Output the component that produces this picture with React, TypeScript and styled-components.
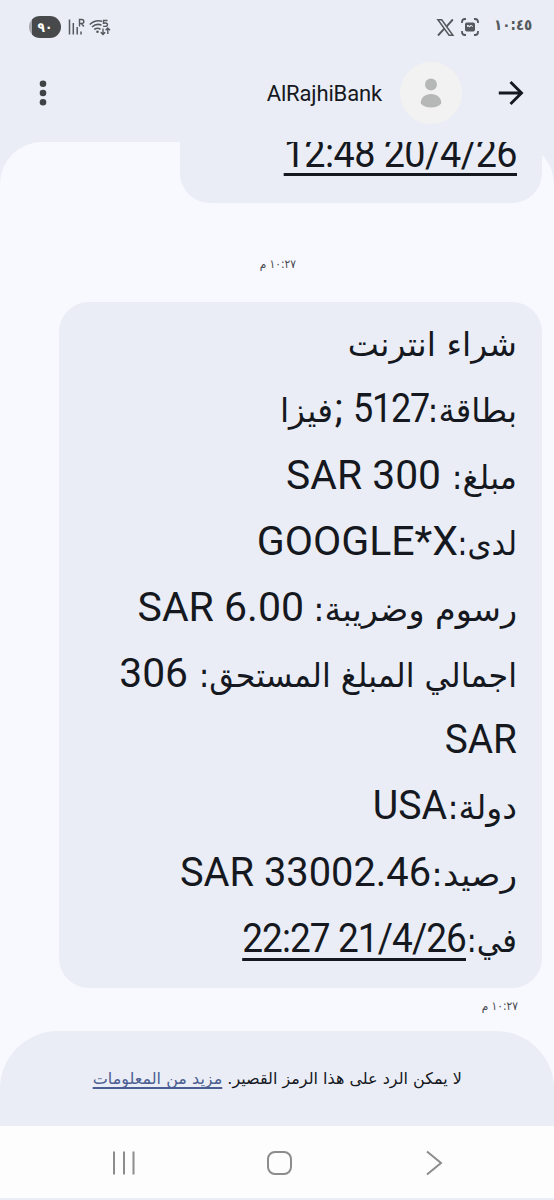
import React from "react";
import styled, { createGlobalStyle } from "styled-components";

const Global = createGlobalStyle`
  * { box-sizing: border-box; }
  body { margin: 0; background: #e9edf5; }
`;

const latin = `Roboto, "Liberation Sans", sans-serif`;
const arabic = `"DejaVu Sans", sans-serif`;
const arabicNarrow = `"DejaVu Sans Condensed", "DejaVu Sans", sans-serif`;

const Screen = styled.div`
  width: 554px;
  height: 1200px;
  display: flex;
  flex-direction: column;
  overflow: hidden;
  direction: rtl;
  background: #eaedf5;
  color: #15181e;
  font-family: ${latin};
`;

const StatusBar = styled.div`
  height: 54px;
  padding: 0 24px 0 29px;
  display: flex;
  align-items: center;
  justify-content: space-between;
  flex: none;
`;

const StatusGroup = styled.div`
  display: flex;
  direction: ltr;
  align-items: center;
  color: #55585d;
`;

const Clock = styled.span`
  margin-left: 15px;
  width: 36px;
  height: 24px;
  font: bold 15px/20px ${arabicNarrow};
  white-space: nowrap;
`;

const Battery = styled.div`
  width: 32px;
  height: 22px;
  margin-right: 7px;
  border-radius: 11px;
  background: linear-gradient(90deg, #a9abb0 0 3px, #47494b 3px);
  color: #fff;
  font: bold 13.5px/22px ${arabicNarrow};
  text-align: center;
`;

const Header = styled.header`
  height: 88px;
  padding: 0 30px 10px 37px;
  display: flex;
  align-items: center;
  flex: none;
`;

const Avatar = styled.div`
  width: 62px;
  height: 62px;
  margin: 0 36px 0 18px;
  border-radius: 50%;
  background: #f2f2f2;
  display: flex;
  align-items: center;
  justify-content: center;
`;

const Title = styled.h1`
  margin: 0 auto 0 0;
  padding-top: 1px;
  flex: 1;
  font: 400 22px/30px ${latin};
  letter-spacing: -0.15px;
  white-space: nowrap;
`;

const Conversation = styled.main`
  flex: 1;
  display: flex;
  flex-direction: column;
  align-items: flex-start;
  overflow: hidden;
  border-radius: 42px 42px 0 0;
  background: #f8f9fe;
`;

const Bubble = styled.section<{ $w: number; $clipped?: boolean }>`
  width: ${(p) => p.$w}px;
  height: ${(p) => (p.$clipped ? "61px" : "686px")};
  margin-right: 12px;
  padding: 7px 25px 16px 0;
  border-radius: ${(p) => (p.$clipped ? "0 0 30px 30px" : "30px")};
  background: #eaedf5;
  display: flex;
  flex-direction: column;
  justify-content: flex-end;
  overflow: hidden;
  flex: none;
`;

const Line = styled.div`
  height: 66.2px;
  flex: none;
  display: flex;
  align-items: baseline;
  font-size: 40px;
  line-height: 66.2px;
  white-space: nowrap;

  &::before {
    content: "\\200b";
    width: 0;
  }
`;

const Latin = styled.span<{ $w: number; $ls?: number; $sx?: number }>`
  width: ${(p) => p.$w}px;
  flex: none;
  direction: ltr;
  display: flex;
  justify-content: flex-end;
  letter-spacing: ${(p) => p.$ls ?? 0}px;
  transform: scaleX(${(p) => p.$sx ?? 1});
  transform-origin: right;
`;

const Arabic = styled.span<{ $w: number; $sx?: number }>`
  width: ${(p) => p.$w}px;
  flex: none;
  font-family: ${arabic};
  font-size: 33px;
  line-height: 50px;
  transform: scaleX(${(p) => p.$sx ?? 1});
  transform-origin: right;
`;

const DateLink = styled(Latin)`
  text-decoration: underline;
  text-decoration-thickness: 3px;
  text-underline-offset: 6px;
  text-decoration-skip-ink: none;
`;

const Stamp = styled.time<{ $center?: boolean }>`
  height: ${(p) => (p.$center ? "99px" : "43px")};
  padding-top: ${(p) => (p.$center ? "51px" : "8px")};
  margin-right: ${(p) => (p.$center ? "258px" : "36px")};
  font: 11.8px/20px ${arabicNarrow};
  color: #45484d;
  flex: none;
  white-space: nowrap;
`;

const Footer = styled.footer`
  height: 95px;
  flex: none;
  padding-right: 92px;
  display: flex;
  align-items: center;
  border-radius: 58px 58px 0 0;
  background: #eaedf5;
  font: 16px/30px ${arabic};
  white-space: nowrap;
`;

const FooterWrap = styled.div`
  background: #f8f9fe;
  flex: none;
`;

const Notice = styled.p`
  margin: 0;
`;

const MoreLink = styled.a`
  color: #4b5d92;
  text-decoration: underline;
  text-decoration-thickness: 1.5px;
  text-underline-offset: 3px;
  text-decoration-skip-ink: none;
`;

const NavBar = styled.nav`
  height: 72px;
  margin-bottom: 2px;
  padding: 2px 111px 0 110px;
  display: flex;
  direction: ltr;
  align-items: center;
  justify-content: space-between;
  background: #fdfdfd;
  flex: none;
`;

const Icon = styled.svg`
  display: block;
  flex: none;
  overflow: visible;
`;

const SnapIcon = styled(Icon)`
  margin-left: 7px;
`;

const WifiIcon = styled(Icon)`
  margin-left: 4px;
`;

export default function App() {
  return (
    <Screen>
      <Global />
      <StatusBar>
        <StatusGroup>
          <Icon width="17" height="17" viewBox="0 0 17 17" fill="none" stroke="currentColor">
            <path d="M.9.7h3.8l11.2 15.6h-3.8z" strokeWidth="1.5" />
            <path d="M15.8.5 9.5 7.6M7.3 9.7 1 16.5" strokeWidth="1.9" />
          </Icon>
          <SnapIcon width="18" height="18" viewBox="0 0 18 18" fill="none" stroke="currentColor" strokeWidth="1.8">
            <path d="M1 5V4Q1 1 4 1H5M13 1h1Q17 1 17 4V5M17 13v1Q17 17 14 17H13M5 17H4Q1 17 1 14V13" />
            <rect x="4" y="4.500" width="10" height="9" rx="1.800" fill="currentColor" stroke="none" />
            <path d="M6 9V7h1.500l.800 1 1.700-1.200 2 1.500v.700l-1.900-1-1.700 1.400-1.100-.900z" fill="#eaedf5" stroke="none" />
          </SnapIcon>
          <Clock>١٠:٤٥</Clock>
        </StatusGroup>
        <StatusGroup>
          <Battery>٩٠</Battery>
          <Icon width="17" height="16" viewBox="0 0 17 16" fill="none" stroke="currentColor" strokeWidth="1.5">
            <path d="M1.500.500v15M5.300 4v11.500M9.200 8v7.500M13 12.500v3" />
            <path d="M11.500 7.500v-7h2.300a2 2 0 0 1 0 4h-2.300M13.500 4.500l2.300 3" strokeWidth="1.400" />
          </Icon>
          <WifiIcon width="22" height="17" viewBox="0 0 22 17" fill="none" stroke="currentColor" strokeWidth="1.600">
            <path d="M.800 5.500Q6 .300 13 2.200M3 8q4-3.800 9.500-2M5.300 10.500q3-2.300 6.200-.300" />
            <circle cx="8.500" cy="12.800" r="1.300" fill="currentColor" stroke="none" />
            <path d="M18.500 1.500h-4v2.700q4-.700 4 1.500 0 2.300-4.300 1.500M14 9.500v6M11.800 13.300l2.200 2.300 2.200-2.300M18.800 15V9M16.600 11.200l2.200-2.300 2.200 2.300" strokeWidth="1.400" />
          </WifiIcon>
        </StatusGroup>
      </StatusBar>

      <Header>
        <Icon width="26" height="24" viewBox="0 0 26 24" fill="none" stroke="#15181e" strokeWidth="2.900">
          <path d="M.800 12h22.500M12.500 1l11 11-11 11" />
        </Icon>
        <Avatar>
          <Icon width="22" height="30" viewBox="0 0 22 30" fill="#b6b8b7">
            <circle cx="11" cy="6.500" r="6" />
            <path d="M.800 25.500v-1C.800 20 5 16 11 16s10.200 4 10.200 8.500v1Q18 29.500 11 29.500T.800 25.500Z" />
          </Icon>
        </Avatar>
        <Title>AlRajhiBank</Title>
        <Icon width="12" height="26" viewBox="0 0 12 26" fill="#404346">
          <circle cx="6" cy="3.700" r="3.300" />
          <circle cx="6" cy="13" r="3.300" />
          <circle cx="6" cy="22.300" r="3.300" />
        </Icon>
      </Header>

      <Conversation>
        <Bubble $w={362} $clipped>
          <Line><DateLink $w={233} $ls={-0.6} $sx={0.944}>12:48 20/4/26</DateLink></Line>
        </Bubble>
        <Stamp $center>١٠:٢٧ م</Stamp>
        <Bubble $w={483}>
          <Line><Arabic $w={167}>شراء انترنت</Arabic></Line>
          <Line><Arabic $w={88} $sx={0.985}>بطاقة:</Arabic><Latin $w={86} $ls={-1.4} $sx={0.9}>5127</Latin><Latin $w={10}>;</Latin><Arabic $w={60}>فيزا</Arabic></Line>
          <Line><Arabic $w={76} $sx={0.97}>مبلغ:&nbsp;</Arabic><Latin $w={155} $sx={1.02}>SAR 300</Latin></Line>
          <Line><Arabic $w={59} $sx={0.93}>لدى:</Arabic><Latin $w={201} $sx={1.026}>GOOGLE*X</Latin></Line>
          <Line><Arabic $w={213} $sx={1.01}>رسوم وضريبة:&nbsp;</Arabic><Latin $w={166} $sx={1.025}>SAR 6.00</Latin></Line>
          <Line><Arabic $w={329} $sx={0.96}>اجمالي المبلغ المستحق:&nbsp;</Arabic><Latin $w={68} $sx={1.02}>306</Latin></Line>
          <Line><Latin $w={73} $sx={0.97}>SAR</Latin></Line>
          <Line><Arabic $w={70}>دولة:</Arabic><Latin $w={74} $sx={0.98}>USA</Latin></Line>
          <Line><Arabic $w={86} $sx={1.04}>رصيد:</Arabic><Latin $w={250} $sx={0.995}>SAR 33002.46</Latin></Line>
          <Line><Arabic $w={51} $sx={0.93}>في:</Arabic><DateLink $w={224} $ls={-1} $sx={0.925}>22:27 21/4/26</DateLink></Line>
        </Bubble>
        <Stamp>١٠:٢٧ م</Stamp>
      </Conversation>

      <FooterWrap>
        <Footer>
          <Notice>لا يمكن الرد على هذا الرمز القصير. <MoreLink>مزيد من المعلومات</MoreLink></Notice>
        </Footer>
      </FooterWrap>
      <NavBar>
        <Icon width="26" height="24" viewBox="0 0 26 24" stroke="#8c8c8c" strokeWidth="2">
          <path d="M4 .500v23M14 .500v23M23.500 .500v23" />
        </Icon>
        <Icon width="26" height="24" viewBox="0 0 26 24" fill="none" stroke="#8c8c8c" strokeWidth="2">
          <rect x="0" y="1" width="23" height="22" rx="7" />
        </Icon>
        <Icon width="18" height="24" viewBox="0 0 18 24" fill="none" stroke="#8c8c8c" strokeWidth="2">
          <path d="m2 .500 14 11.500L2 23.500" />
        </Icon>
      </NavBar>
    </Screen>
  );
}
